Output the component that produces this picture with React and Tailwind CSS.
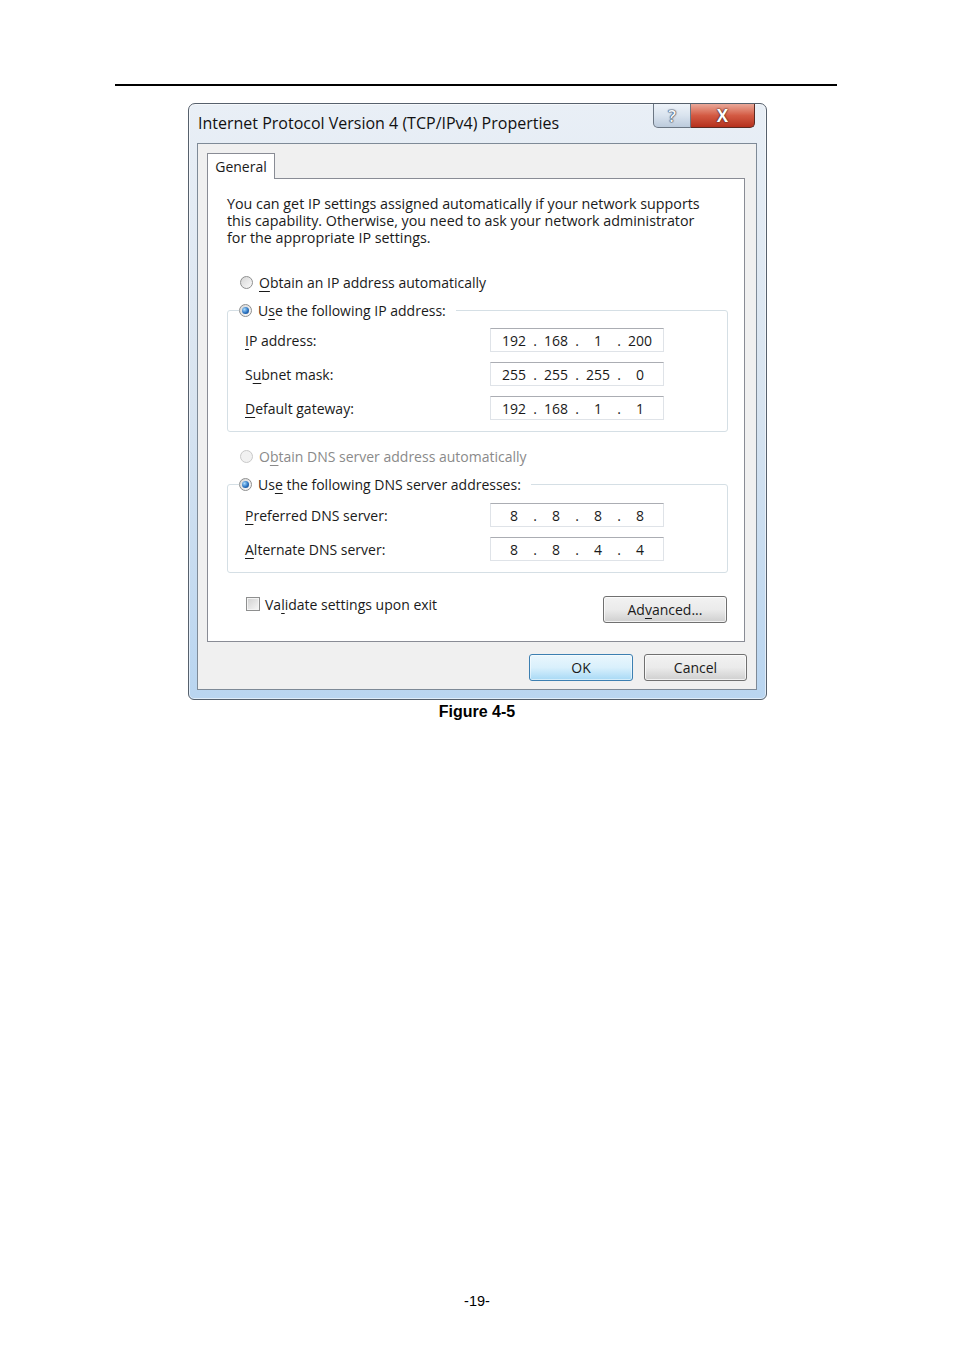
import React from "react";

const F = { fontFamily: "'Open Sans', 'Noto Sans', sans-serif" };

function Radio({ checked, disabled }) {
  return (
    <span
      className={
        "w-[13px] h-[13px] rounded-full border flex items-center justify-center shrink-0 " +
        (disabled
          ? "border-[#c9c9c9] bg-[#f1f1f1]"
          : "border-[#8e8f8f] bg-linear-to-br from-[#d6d6d6] to-[#fbfbfb]")
      }
    >
      {checked && (
        <span className="w-[7px] h-[7px] rounded-full bg-[radial-gradient(circle_at_35%_35%,#a8dcff,#2a72c0_55%,#0c3a7a)]" />
      )}
    </span>
  );
}

function U({ children }) {
  return <span className="underline decoration-1 underline-offset-[3px]">{children}</span>;
}

function IpField({ parts }) {
  return (
    <div className="w-[174px] h-[24px] border border-[#dfe3e8] border-t-[#abadb3] bg-white flex items-center pl-[2px] text-[14px] text-[#1a1a1a]">
      {parts.map((p, i) => (
        <React.Fragment key={i}>
          <span className="w-[42px] text-center">{p}</span>
          {i < 3 && (
            <span className="w-0 flex justify-center">
              <span>.</span>
            </span>
          )}
        </React.Fragment>
      ))}
    </div>
  );
}

function FieldRow({ label, parts, first }) {
  return (
    <div className={"flex items-center h-[24px] " + (first ? "" : "mt-[10px]")}>
      <div className="w-[262px] pl-[17px] text-[14px] text-[#1a1a1a]">{label}</div>
      <IpField parts={parts} />
    </div>
  );
}

function WinButton({ children, primary, className }) {
  return (
    <div
      className={
        "h-[27px] rounded-[3px] border flex items-center justify-center text-[14px] text-[#1a1a1a] " +
        (primary
          ? "border-[#3c7fb1] bg-linear-to-b from-[#eaf6fd] via-[#d9f0fc] to-[#a7d9f5] shadow-[inset_0_0_0_1px_#ffffff80]"
          : "border-[#707070] bg-linear-to-b from-[#f2f2f2] via-[#ebebeb] to-[#cfcfcf] shadow-[inset_0_0_0_1px_#ffffffb0]") +
        " " +
        (className || "")
      }
    >
      {children}
    </div>
  );
}

export default function App() {
  return (
    <div className="w-[954px] h-[1350px] bg-white flex flex-col" style={F}>
      <div className="mt-[84px] ml-[115px] w-[722px] h-[2px] bg-black" />

      {/* Dialog window */}
      <div className="mt-[17px] ml-[188px] w-[579px] h-[597px] rounded-t-[7px] rounded-b-[6px] border border-[#56606c] bg-linear-to-b from-[#e9eff6] via-[#d8e4f0] to-[#b9d5f0] flex flex-col pl-[8px] pr-[9px] pb-[9px] shadow-[inset_0_0_0_1px_#ffffff90]">
        {/* Title bar */}
        <div className="h-[39px] flex items-start justify-between shrink-0">
          <div className="mt-[9px] ml-[1px] text-[16px] leading-[20px] text-[#111] whitespace-nowrap">
            Internet Protocol Version 4 (TCP/IPv4) Properties
          </div>
          <div className="flex items-start mr-[2px]">
            <div className="w-[38px] h-[24px] border border-t-0 border-[#6b7683] rounded-bl-[5px] bg-linear-to-b from-[#eef3f9] via-[#d9e3ee] to-[#bccbdc] flex items-center justify-center text-[17px] font-semibold text-[#f3f6fa] leading-none [text-shadow:0_0_1px_#3f4f66,0_0_1px_#3f4f66,0_0_1px_#3f4f66,0_0_2px_#3f4f66]">
              ?
            </div>
            <div className="w-[64px] h-[24px] border border-t-0 border-l-0 border-[#5a2a22] rounded-br-[5px] bg-linear-to-b from-[#e9a899] via-[#d35a43] to-[#b5301c] flex items-center justify-center text-[17px] font-bold text-white leading-none [text-shadow:0_0_2px_#3a1a14,0_0_1px_#3a1a14]">
              X
            </div>
          </div>
        </div>

        {/* Client area */}
        <div className="flex-1 border border-[#7e8a97] bg-[#f0f0f0] flex flex-col">
          {/* Tab */}
          <div className="mt-[9px] ml-[9px] flex">
            <div className="w-[68px] h-[26px] border border-b-0 border-[#898c95] bg-white -mb-px relative z-10 flex items-center justify-center text-[14px] text-[#1a1a1a]">
              General
            </div>
          </div>

          {/* Tab panel */}
          <div className="ml-[9px] w-[538px] h-[464px] border border-[#898c95] bg-white flex flex-col">
            <p className="mt-[16px] ml-[19px] text-[14.3px] leading-[17px] text-[#1a1a1a] whitespace-nowrap">
              You can get IP settings assigned automatically if your network supports
              <br />
              this capability. Otherwise, you need to ask your network administrator
              <br />
              for the appropriate IP settings.
            </p>

            <div className="mt-[26px] ml-[32px] h-[20px] flex items-center gap-[6px] text-[14px] text-[#1a1a1a]">
              <Radio />
              <span>
                <U>O</U>btain an IP address automatically
              </span>
            </div>

            <fieldset className="mt-[8px] ml-[19px] w-[501px] border border-[#d5dfe5] rounded-[3px] pb-[11px]">
              <legend className="ml-[11px] pr-[10px] h-[20px] flex items-center gap-[6px] text-[14px] text-[#1a1a1a]">
                <Radio checked />
                <span>
                  U<U>s</U>e the following IP address:
                </span>
              </legend>
              <div className="mt-[8px]">
                <FieldRow first label={<><U>I</U>P address:</>} parts={["192", "168", "1", "200"]} />
                <FieldRow label={<>S<U>u</U>bnet mask:</>} parts={["255", "255", "255", "0"]} />
                <FieldRow label={<><U>D</U>efault gateway:</>} parts={["192", "168", "1", "1"]} />
              </div>
            </fieldset>

            <div className="mt-[14px] ml-[32px] h-[20px] flex items-center gap-[6px] text-[14px] text-[#8a8a8a]">
              <Radio disabled />
              <span>
                O<U>b</U>tain DNS server address automatically
              </span>
            </div>

            <fieldset className="mt-[8px] ml-[19px] w-[501px] border border-[#d5dfe5] rounded-[3px] pb-[11px]">
              <legend className="ml-[11px] pr-[10px] h-[20px] flex items-center gap-[6px] text-[14px] text-[#1a1a1a]">
                <Radio checked />
                <span>
                  Us<U>e</U> the following DNS server addresses:
                </span>
              </legend>
              <div className="mt-[9px]">
                <FieldRow first label={<><U>P</U>referred DNS server:</>} parts={["8", "8", "8", "8"]} />
                <FieldRow label={<><U>A</U>lternate DNS server:</>} parts={["8", "8", "4", "4"]} />
              </div>
            </fieldset>

            <div className="mt-[21px] flex items-start justify-between">
              <div className="ml-[38px] h-[20px] flex items-center gap-[5px] text-[14px] text-[#1a1a1a]">
                <span className="w-[14px] h-[14px] border border-[#8e8f8f] bg-linear-to-br from-[#d0d0d0] to-[#f8f8f8] shadow-[inset_0_0_0_1px_#f4f4f4] shrink-0" />
                <span>
                  Va<U>l</U>idate settings upon exit
                </span>
              </div>
              <WinButton className="mt-[2px] mr-[17px] w-[124px]">
                <span>
                  Ad<U>v</U>anced...
                </span>
              </WinButton>
            </div>
          </div>

          {/* Bottom buttons */}
          <div className="mt-[12px] pr-[9px] flex justify-end gap-[11px]">
            <WinButton primary className="w-[104px]">OK</WinButton>
            <WinButton className="w-[103px]">Cancel</WinButton>
          </div>
        </div>
      </div>

      <div
        className="mt-[2px] h-[20px] flex items-center justify-center text-[16px] font-bold text-black"
        style={{ fontFamily: "'Liberation Sans', Arial, sans-serif" }}
      >
        Figure 4-5
      </div>

      <div
        className="mt-[571px] h-[18px] flex items-center justify-center text-[14.5px] text-black"
        style={{ fontFamily: "'Liberation Sans', Arial, sans-serif" }}
      >
        -19-
      </div>
    </div>
  );
}
